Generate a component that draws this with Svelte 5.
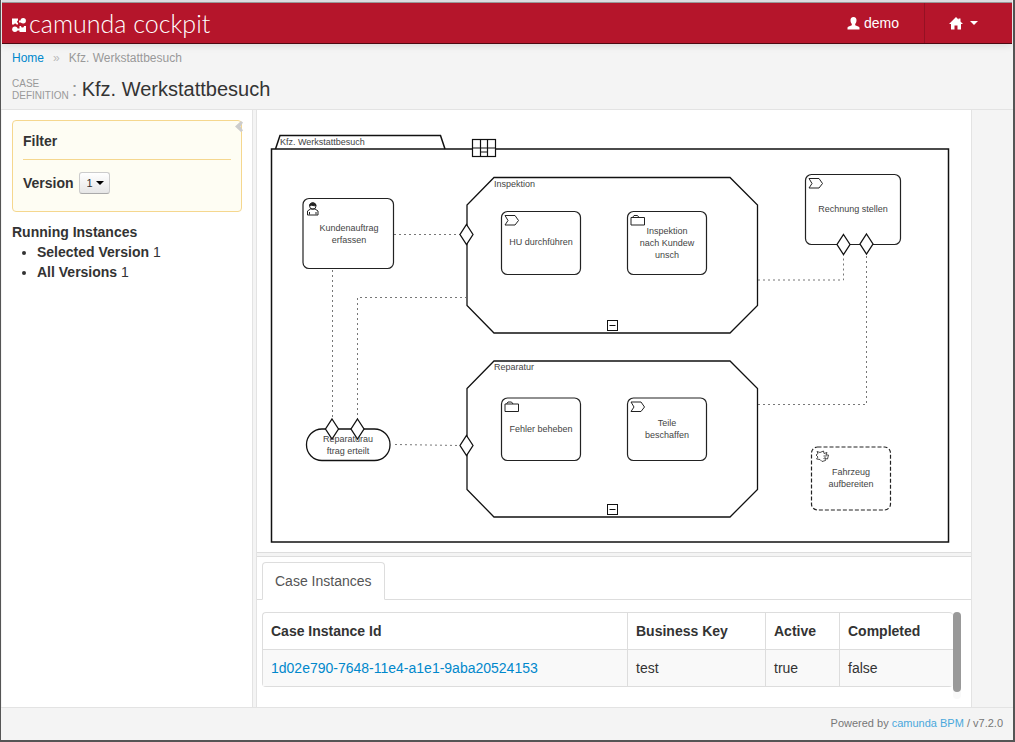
<script>
  const columns = ['Case Instance Id', 'Business Key', 'Active', 'Completed'];
  const instances = [
    { id: '1d02e790-7648-11e4-a1e1-9aba20524153', key: 'test', active: 'true', completed: 'false' }
  ];
  const counts = [
    { label: 'Selected Version', value: 1 },
    { label: 'All Versions', value: 1 }
  ];
  let version = $state('1');

  const tasks = [
    { x: 303, y: 198.500, w: 90.500, h: 70, icon: 'user', cx: 349, ty: 231, lines: ['Kundenauftrag', 'erfassen'] },
    { x: 501.500, y: 211.500, w: 79, h: 63, icon: 'process', cx: 541, ty: 245, lines: ['HU durchführen'] },
    { x: 627.500, y: 211.500, w: 79, h: 63, icon: 'case', cx: 667, ty: 234, lines: ['Inspektion', 'nach Kundew', 'unsch'] },
    { x: 805.500, y: 174.500, w: 95, h: 70, icon: 'process', cx: 853, ty: 212, lines: ['Rechnung stellen'] },
    { x: 501.500, y: 398, w: 79, h: 62.500, icon: 'case', cx: 541, ty: 432, lines: ['Fehler beheben'] },
    { x: 627.500, y: 398, w: 79, h: 62.500, icon: 'process', cx: 667, ty: 426, lines: ['Teile', 'beschaffen'] },
    { x: 811.500, y: 447, w: 79, h: 63, icon: 'hand', cx: 851, ty: 475, lines: ['Fahrzeug', 'aufbereiten'], dashed: true }
  ];
  const stages = [
    { label: 'Inspektion', y: 177.500, h: 155.500 },
    { label: 'Reparatur', y: 361, h: 156 }
  ];
  const links = [
    'M394 234.500H460',
    'M332.500 270V420',
    'M357.500 420V297.500H466',
    'M395 444.500L460 445.500',
    'M758 280H843.500V254',
    'M758 404.500H866.500V254'
  ];
  const criteria = [[466.500, 234.500], [466.500, 445.500], [332, 429], [357.500, 429], [843.500, 244.500], [866.500, 244]];
</script>

<div class="window">
  <header>
    <a class="brand" href="#/">
      <svg width="14" height="14" viewBox="0 0 14 14" aria-hidden="true">
        <path fill="#fff" d="M0 .5H6V2.500A1.300 1.300 0 0 0 6 5V6.500H4.500A1.300 1.300 0 0 0 2 6.500H0Z" />
        <circle cx="11.200" cy="2.800" r="2.700" fill="#fff" />
        <path fill="#fff" d="M7 2.500H10V4.500H7Z" />
        <circle cx="2.900" cy="11.200" r="2.700" fill="#fff" />
        <path fill="#fff" d="M7.500 8H9A1.500 1.500 0 0 0 12 8H14V14H7.500V12.500H5V10.500H7.500Z" />
      </svg>
      <span>camunda cockpit</span>
    </a>
    <nav>
      <a href="#/user">
        <svg width="13" height="13" viewBox="0 0 13 13" aria-hidden="true">
          <path fill="#fff" d="M6.500 0C8.600 0 9.600 1.300 9.500 3.300C9.500 5 8.900 6.200 8.200 7V8.300C9.500 9.200 12 9.500 12.500 10.500V12.500H.5V10.500C1 9.500 3.500 9.200 4.800 8.300V7C4.100 6.200 3.500 5 3.500 3.300C3.400 1.300 4.400 0 6.500 0Z" />
        </svg>
        demo
      </a>
      <a class="home" href="#/apps" aria-label="Applications">
        <svg width="14" height="13" viewBox="0 0 14 13" aria-hidden="true">
          <path fill="#fff" d="M7 0L9.500 2.500V1.500H11.500V4.500L14 7H12V12.500H8.500V8.500H5.500V12.500H2V7H0Z" />
        </svg>
        <i class="caret"></i>
      </a>
    </nav>
  </header>

  <div class="heading">
    <div class="crumbs">
      <a href="#/home">Home</a><span class="sep">»</span><span>Kfz. Werkstattbesuch</span>
    </div>
    <h1><small>CASE<br />DEFINITION</small><b>:</b> <span>Kfz. Werkstattbesuch</span></h1>
  </div>

  <main>
    <aside>
      <section class="filter">
        <button class="collapse" aria-label="Collapse">
          <svg width="8" height="11" viewBox="0 0 8 11"><path fill="#ccc" d="M0 5.500L6 0L8 1.500L5.500 5.500L8 9.500L6 11Z" /></svg>
        </button>
        <h2>Filter</h2>
        <div class="version">
          <label for="version">Version</label>
          <span class="pick">
            <select id="version" bind:value={version}><option>1</option></select>
          </span>
        </div>
      </section>
      <h3>Running Instances</h3>
      <ul>
        {#each counts as c}
          <li><strong>{c.label}</strong> {c.value}</li>
        {/each}
      </ul>
    </aside>

    <div class="content">
      <section class="diagram">
        <svg viewBox="257 110 714 442" role="img" aria-label="Kfz. Werkstattbesuch">
          <g fill="none" stroke="#111" stroke-width="1.500">
            <path d="M275.500 149L280 135.500H440.500L445 149" />
            <rect x="271.500" y="149" width="677" height="393" />
          </g>
          <text x="280" y="145">Kfz. Werkstattbesuch</text>
          <g fill="#fff" stroke="#111" stroke-width="1.200">
            <rect x="472.500" y="139.500" width="23" height="17" />
            <path d="M480.500 139.500V156.500M487.500 139.500V156.500M472.500 148H495.500M480.500 152H487.500" />
          </g>

          {#each links as d}
            <path {d} fill="none" stroke="#777" stroke-dasharray="2 3" />
          {/each}

          {#each stages as s}
            <path
              d="M494 {s.y}H730L757.500 {s.y + 27.500}V{s.y + s.h - 27.500}L730 {s.y + s.h}H494L467 {s.y + s.h - 27.500}V{s.y + 27.500}Z"
              fill="#fff" stroke="#111" stroke-width="1.300" />
            <text x="494" y={s.y + 9}>{s.label}</text>
            <rect x="607.500" y={s.y + s.h - 12.500} width="10" height="10" fill="#fff" stroke="#111" />
            <path d="M609.500 {s.y + s.h - 7.500}H615.500" stroke="#111" />
          {/each}

          <rect x="306.500" y="429" width="83.500" height="31.500" rx="15.500" fill="#fff" stroke="#111" stroke-width="1.300" />

          {#each tasks as t}
            <rect x={t.x} y={t.y} width={t.w} height={t.h} rx="6" fill="#fff" stroke="#222" stroke-width="1.200"
              stroke-dasharray={t.dashed ? '4 2' : undefined} />
            <g transform="translate({t.x} {t.y})" fill="none" stroke="#222">
              {#if t.icon === 'process'}
                <path d="M3.500 4H13.500L17 9L13.500 13.500H3.500L6.500 9Z" />
              {:else if t.icon === 'case'}
                <path d="M3.500 6H17V13.500H3.500ZM5 6L6.500 4H10L11.500 6" />
              {:else if t.icon === 'user'}
                <path d="M4.500 16.500V12.500L7.500 10.500H12L15 12.500V16.500ZM6.500 16V13.500M13 16V13.500" />
                <circle cx="9.800" cy="7.500" r="3.200" />
                <path d="M6.500 7C7 3.500 12.500 3.500 13 7C11 8 9 6 6.500 7Z" fill="#222" />
              {:else}
                <path d="M5 12L6.500 10L4.500 8L6.500 6.500L5.500 4.500L8.500 5.500L12 4L12.500 6.500L15.500 5.500L14.500 8H17L16 12L13.500 11.500L14 13.500L10.500 14.500L8.500 12.500ZM12 9H15M12 11.500L14 10.500" stroke-width=".8" />
              {/if}
            </g>
            {#each t.lines as line, i}
              <text class="mid" x={t.cx} y={t.ty + i * 12}>{line}</text>
            {/each}
          {/each}

          {#each criteria as [x, y]}
            <path d="M{x} {y - 10}L{x + 6.500} {y}L{x} {y + 10}L{x - 6.500} {y}Z" fill="#fff" stroke="#111" stroke-width="1.300" />
          {/each}
          <text class="mid" x="348" y="442">Reparaturau</text>
          <text class="mid" x="348" y="454">ftrag erteilt</text>
        </svg>
      </section>

      <section class="instances">
        <div class="tabs"><a href="#/instances">Case Instances</a></div>
        <div class="scroller">
          <div class="grid">
            <table>
              <thead>
                <tr>{#each columns as c}<th scope="col">{c}</th>{/each}</tr>
              </thead>
              <tbody>
                {#each instances as row}
                  <tr>
                    <td><a href="#/case">{row.id}</a></td>
                    <td>{row.key}</td>
                    <td>{row.active}</td>
                    <td>{row.completed}</td>
                  </tr>
                {/each}
              </tbody>
            </table>
          </div>
          <div class="track"><div class="thumb"></div></div>
        </div>
      </section>
    </div>
  </main>

  <footer>Powered by <a href="#/about">camunda BPM</a> / v7.2.0</footer>
</div>

<style>
  :global(body) {
    background: #f4f4f4;
  }
  .window,
  .window * {
    box-sizing: border-box;
  }
  .window {
    display: flex;
    flex-direction: column;
    min-height: 100vh;
    border: solid #555;
    border-width: 0 2px 2px 1px;
    background: #f4f4f4;
    color: #333;
    font: 14px/20px "Liberation Sans", Arial, sans-serif;
  }
  a {
    color: #08c;
    text-decoration: none;
  }
  header {
    display: flex;
    justify-content: space-between;
    height: 44px;
    padding-top: 1px;
    margin: 0 1px;
    border-top: 2px solid #dcdce0;
    border-bottom: 1px solid #4d0912;
    background: #b5152b;
    box-shadow: inset 0 1px #999, 0 1px 8px rgba(0, 0, 0, 0.12);
  }
  .brand {
    display: flex;
    align-items: center;
    gap: 3px;
    padding-left: 10px;
    color: #fff;
    font: 300 25px/40px Lato, sans-serif;
  }
  .brand svg {
    margin-top: 4px;
  }
  nav {
    display: flex;
  }
  nav a {
    display: flex;
    align-items: center;
    gap: 4px;
    padding: 0 25px;
    color: #fff;
  }
  .home {
    gap: 7px;
    padding: 0 34px 0 24px;
    border-left: 1px solid #951123;
  }
  .caret {
    border: 4px solid transparent;
    border-top-color: #fff;
    border-bottom: 0;
  }
  .heading {
    height: 66px;
    padding: 4px 11px 0;
    border-bottom: 1px solid #e3e3e3;
  }
  .crumbs {
    color: #999;
    font-size: 12px;
  }
  .sep {
    margin: 0 9px;
    color: #bbb;
  }
  h1 {
    display: flex;
    align-items: center;
    margin: 8px 0 0;
    font-size: 20px;
    font-weight: 400;
    line-height: 24px;
  }
  h1 small {
    padding-top: 2px;
    color: #999;
    font-size: 10px;
    line-height: 12px;
  }
  h1 b {
    width: 13px;
    padding-left: 3px;
    color: #999;
    font-weight: 400;
  }
  main {
    display: flex;
    flex: 1;
    margin-right: 41px;
    padding-left: 1px;
  }
  aside {
    flex: none;
    width: 251px;
    padding: 10px;
    border-right: 1px solid #e3e3e3;
    background: #fff;
  }
  .filter {
    position: relative;
    height: 92px;
    padding: 10px;
    border: 1px solid #f5d78e;
    border-radius: 4px;
    background: #fefdf3;
  }
  .collapse {
    position: absolute;
    top: 0;
    right: -2px;
    display: flex;
    padding: 0;
    border: 0;
    background: none;
  }
  h2,
  h3 {
    margin: 0;
    font-size: 14px;
    font-weight: 700;
    line-height: 20px;
  }
  h2 {
    padding-bottom: 8px;
    border-bottom: 1px solid #f5d78e;
  }
  .version {
    display: flex;
    align-items: center;
    gap: 5px;
    margin-top: 12px;
    font-weight: 700;
  }
  .pick {
    position: relative;
    display: flex;
  }
  .pick::after {
    content: "";
    position: absolute;
    top: 9px;
    right: 6px;
    border: 4px solid transparent;
    border-top-color: #000;
    border-bottom: 0;
    pointer-events: none;
  }
  select {
    width: 31px;
    height: 22px;
    padding: 0 7px;
    appearance: none;
    border: 1px solid #ccc;
    border-bottom-color: #aaa;
    border-radius: 3px;
    background: linear-gradient(#fff, #e6e6e6);
    color: #333;
    font: 11px/20px "Liberation Sans", Arial, sans-serif;
  }
  h3 {
    margin-top: 10px;
  }
  ul {
    margin: 0;
    padding-left: 25px;
  }
  .content {
    display: flex;
    flex: 1;
    flex-direction: column;
    gap: 3px;
    min-width: 0;
    margin-left: 3px;
    border: solid #e3e3e3;
    border-width: 0 1px;
  }
  .diagram {
    flex: 1;
    border-bottom: 1px solid #ddd;
    background: #fff;
  }
  .diagram svg {
    display: block;
    width: 100%;
  }
  text {
    fill: #444;
    font: 9px "Liberation Sans", Arial, sans-serif;
  }
  .mid {
    text-anchor: middle;
  }
  .instances {
    padding: 5px 0 8px;
    border-top: 1px solid #ddd;
    background: #fff;
  }
  .tabs {
    display: flex;
    padding-left: 5px;
    border-bottom: 1px solid #ddd;
  }
  .tabs a {
    margin-bottom: -1px;
    padding: 8px 12px;
    border: 1px solid #ddd;
    border-bottom-color: #fff;
    border-radius: 4px 4px 0 0;
    background: #fff;
    color: #555;
  }
  .scroller {
    display: flex;
    margin: 12px 10px 0 5px;
  }
  .grid {
    flex: 1;
  }
  table {
    width: 100%;
    border: 1px solid #ddd;
    border-right: 0;
    border-radius: 4px;
    border-spacing: 0;
    table-layout: fixed;
  }
  th,
  td {
    height: 37px;
    padding: 0 8px;
    border-left: 1px solid #ddd;
    text-align: left;
  }
  th:first-child,
  td:first-child {
    border-left: 0;
  }
  th:nth-child(2) {
    width: 20%;
  }
  th:nth-child(3) {
    width: 74px;
  }
  th:nth-child(4) {
    width: 114px;
  }
  th {
    height: 36px;
  }
  td {
    border-top: 1px solid #ddd;
    background: #f9f9f9;
  }
  .track {
    width: 8px;
    height: 87px;
    border-radius: 4px;
    background: #f9f9f9;
  }
  .thumb {
    height: 80px;
    border-radius: 4px;
    background: #999;
  }
  footer {
    height: 33px;
    padding: 5px 10px 0;
    border-top: 1px solid #e3e3e3;
    color: #777;
    font-size: 11px;
    text-align: right;
  }
  footer a {
    color: #4aa8dc;
  }
</style>
